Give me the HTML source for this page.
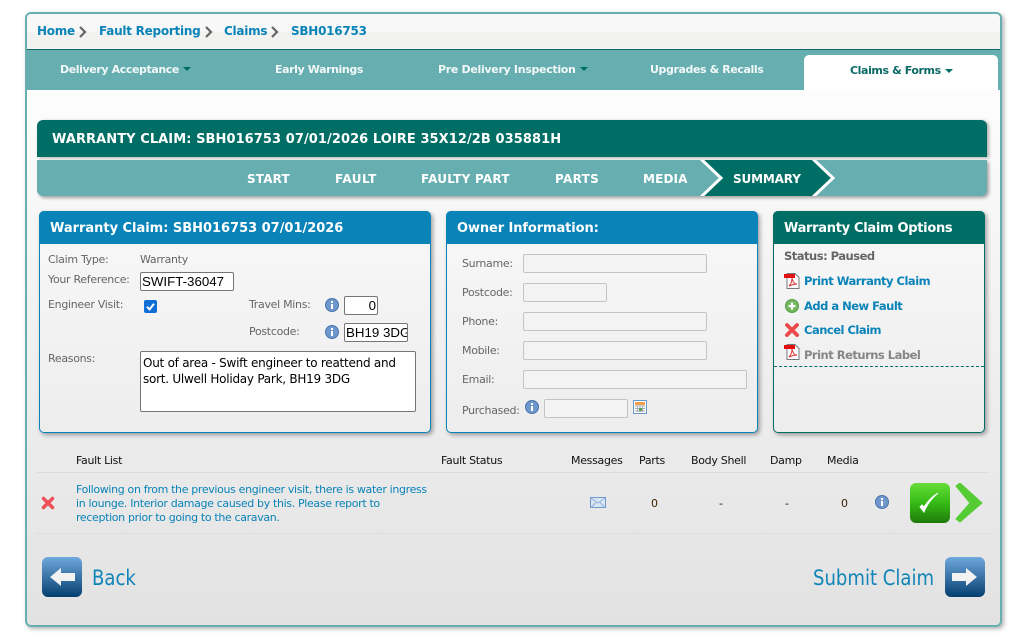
<!DOCTYPE html>
<html><head><meta charset="utf-8"><title>Warranty Claim</title>
<style>
html,body{margin:0;padding:0;background:#fff}
body{width:1026px;height:637px;position:relative;overflow:hidden;font-family:"DejaVu Sans","Liberation Sans",sans-serif;font-size:11px;letter-spacing:-.3px;color:#666}
.a,.t,.b,.i{position:absolute}
.t,.b{white-space:nowrap;line-height:14px}
.b{font-weight:bold;letter-spacing:-.25px}
.blue{color:#0a83b8}
.w{color:#fff}
.k{color:#111}
.nav{font-size:11px;letter-spacing:-.4px;color:#f2f8f8}
.step{font-size:12px;letter-spacing:.15px;color:#fff}
.opt{font-size:11.5px;letter-spacing:-.5px}
.panel{position:absolute;top:211px;height:220px;border-radius:5px;background:linear-gradient(#f8f8f8,#ededed);box-shadow:2px 2px 4px rgba(0,0,0,.35);border:1px solid #0a83b8}
.head{position:absolute;left:-1px;right:-1px;top:-1px;height:33px;border-radius:5px 5px 0 0;background:#0a83b8}
.inp{position:absolute;box-sizing:border-box;background:#fff;border:1px solid #767676;border-radius:2px;color:#000;font-family:"Liberation Sans",sans-serif;font-size:13.3px;letter-spacing:0;line-height:16px;overflow:hidden;white-space:nowrap;padding:1px}
.dis{position:absolute;box-sizing:border-box;border:1px solid #c4c4c4;border-radius:2px;background:#f3f3f3;height:19px}
.big{font-size:21px;line-height:26px;letter-spacing:0;color:#0f85b8;transform:scaleX(.86);transform-origin:0 0}
svg{position:absolute;display:block}
</style></head><body>

<div class="a" style="left:25px;top:12px;width:973px;height:611px;border:2px solid #66aeb0;border-radius:6px;background:linear-gradient(#fff,#fdfdfd 12%,#e2e2e2);box-shadow:2px 2px 4px rgba(0,0,0,.3)"></div>
<div class="a" style="left:27px;top:14px;width:973px;height:35px;background:linear-gradient(#f8f8f8,#f8f8f8 50%,#f2f2f1 50%);border-radius:4px 4px 0 0;border-bottom:1px solid #0e6a66"></div>
<div class="a" style="left:27px;top:50px;width:973px;height:40px;background:#66aeb0"></div>
<div class="a" style="left:804px;top:55px;width:194px;height:35px;background:#fff;border-radius:5px 5px 0 0"></div>

<div class="b blue" style="left:37px;top:24px;font-size:12px">Home</div>
<svg style="left:78px;top:26px" width="10" height="12"><path d="M2 1l5 5-5 5" fill="none" stroke="#666" stroke-width="2.2"/></svg>
<div class="b blue" style="left:99px;top:24px;font-size:12px">Fault Reporting</div>
<svg style="left:204px;top:26px" width="10" height="12"><path d="M2 1l5 5-5 5" fill="none" stroke="#666" stroke-width="2.2"/></svg>
<div class="b blue" style="left:224px;top:24px;font-size:12px">Claims</div>
<svg style="left:270px;top:26px" width="10" height="12"><path d="M2 1l5 5-5 5" fill="none" stroke="#666" stroke-width="2.2"/></svg>
<div class="b blue" style="left:291px;top:24px;font-size:12px">SBH016753</div>

<div class="b nav" style="left:60px;top:63px">Delivery Acceptance</div>
<svg style="left:183px;top:67px" width="8" height="5"><path d="M0 0h8L4 4z" fill="#006e65"/></svg>
<div class="b nav" style="left:275px;top:63px">Early Warnings</div>
<div class="b nav" style="left:438px;top:63px;letter-spacing:-.31px">Pre Delivery Inspection</div>
<svg style="left:580px;top:67px" width="8" height="5"><path d="M0 0h8L4 4z" fill="#006e65"/></svg>
<div class="b nav" style="left:650px;top:63px">Upgrades &amp; Recalls</div>
<div class="b nav" style="left:850px;top:64px;color:#0c6a66">Claims &amp; Forms</div>
<svg style="left:945px;top:69px" width="8" height="5"><path d="M0 0h8L4 4z" fill="#006e65"/></svg>

<div class="a" style="left:37px;top:120px;width:950px;height:37px;background:#006e65;border-radius:6px 6px 0 0;box-shadow:2px 1px 3px rgba(0,0,0,.3)"></div>
<div class="a" style="left:37px;top:160px;width:950px;height:36px;background:#66aeb0;border-radius:0 0 6px 6px;box-shadow:2px 2px 3px rgba(0,0,0,.35)"></div>
<div class="b w" style="left:52px;top:133px;font-size:13px;letter-spacing:.07px">WARRANTY CLAIM: SBH016753 07/01/2026 LOIRE 35X12/2B 035881H</div>
<svg style="left:698px;top:160px" width="140" height="36"><path d="M3 0H115L137 18 115 36H3L23 18z" fill="#006e65"/><path d="M115 0H137V36H115L137 18z" fill="#66aeb0"/><path d="M3-1L23 18 3 37M115-1L135 18 115 37" fill="none" stroke="#fff" stroke-width="3"/></svg>
<div class="b step" style="left:247px;top:172px">START</div>
<div class="b step" style="left:335px;top:172px;letter-spacing:.5px">FAULT</div>
<div class="b step" style="left:421px;top:172px;letter-spacing:.25px">FAULTY PART</div>
<div class="b step" style="left:555px;top:172px;letter-spacing:.3px">PARTS</div>
<div class="b step" style="left:643px;top:172px">MEDIA</div>
<div class="b step" style="left:733px;top:172px;letter-spacing:-.15px">SUMMARY</div>

<!-- Left panel -->
<div class="panel" style="left:39px;width:390px"><div class="head"></div></div>
<div class="b w" style="left:50px;top:222px;font-size:13px;letter-spacing:-.02px">Warranty Claim: SBH016753 07/01/2026</div>
<div class="t" style="left:48px;top:253px">Claim Type:</div>
<div class="t" style="left:140px;top:253px">Warranty</div>
<div class="t" style="left:48px;top:273px">Your Reference:</div>
<div class="inp" style="left:140px;top:272px;width:94px;height:19px">SWIFT-36047</div>
<div class="t" style="left:48px;top:298px">Engineer Visit:</div>
<svg style="left:144px;top:300px" width="13" height="13"><rect width="13" height="13" rx="2" fill="#0f6fd6"/><path d="M3 6.800l2.600 2.600L10 3.800" fill="none" stroke="#fff" stroke-width="2"/></svg>
<div class="t" style="left:249px;top:298px">Travel Mins:</div>
<svg class="i" style="left:325px;top:298px" width="14" height="14"><circle cx="7" cy="7" r="6.500" fill="#6e97cb" stroke="#4a74ab"/><rect x="6" y="6" width="2" height="5" fill="#fff"/><rect x="6" y="3" width="2" height="2" fill="#fff"/></svg>
<div class="inp" style="left:344px;top:296px;width:34px;height:19px;text-align:right">0</div>
<div class="t" style="left:249px;top:325px">Postcode:</div>
<svg class="i" style="left:325px;top:325px" width="14" height="14"><circle cx="7" cy="7" r="6.500" fill="#6e97cb" stroke="#4a74ab"/><rect x="6" y="6" width="2" height="5" fill="#fff"/><rect x="6" y="3" width="2" height="2" fill="#fff"/></svg>
<div class="inp" style="left:344px;top:323px;width:64px;height:19px">BH19 3DG</div>
<div class="t" style="left:48px;top:352px">Reasons:</div>
<div class="inp" style="left:140px;top:351px;width:276px;height:61px;font-family:'DejaVu Sans',sans-serif;font-size:12px;letter-spacing:-.25px;white-space:normal;padding:3px 2px">Out of area - Swift engineer to reattend and<br>sort. Ulwell Holiday Park, BH19 3DG</div>

<!-- Owner panel -->
<div class="panel" style="left:446px;width:310px"><div class="head"></div></div>
<div class="b w" style="left:457px;top:222px;font-size:13px;letter-spacing:-.1px">Owner Information:</div>
<div class="t" style="left:462px;top:257px">Surname:</div><div class="dis" style="left:523px;top:254px;width:184px"></div>
<div class="t" style="left:462px;top:286px">Postcode:</div><div class="dis" style="left:523px;top:283px;width:84px"></div>
<div class="t" style="left:462px;top:315px">Phone:</div><div class="dis" style="left:523px;top:312px;width:184px"></div>
<div class="t" style="left:462px;top:344px">Mobile:</div><div class="dis" style="left:523px;top:341px;width:184px"></div>
<div class="t" style="left:462px;top:373px">Email:</div><div class="dis" style="left:523px;top:370px;width:224px"></div>
<div class="t" style="left:462px;top:404px">Purchased:</div>
<svg class="i" style="left:525px;top:400px" width="14" height="14"><circle cx="7" cy="7" r="6.500" fill="#6e97cb" stroke="#4a74ab"/><rect x="6" y="6" width="2" height="5" fill="#fff"/><rect x="6" y="3" width="2" height="2" fill="#fff"/></svg>
<div class="dis" style="left:544px;top:399px;width:84px"></div>
<svg style="left:633px;top:400px" width="14" height="14"><rect x=".5" y=".5" width="13" height="13" fill="#fff" stroke="#6e97cb"/><rect x="2" y="2" width="10" height="3" fill="#f2a04e"/><path d="M2 6h10M2 8.500h10M2 11h10M4.500 6v6M7 6v6M9.500 6v6" stroke="#aab" stroke-width="1"/><rect x="6" y="8" width="3" height="3" fill="#5aa650"/></svg>

<!-- Options panel -->
<div class="panel" style="left:773px;width:210px;border-color:#006e65"><div class="head" style="background:#006e65"></div></div>
<div class="b w" style="left:784px;top:222px;font-size:13px;letter-spacing:-.3px">Warranty Claim Options</div>
<div class="b opt" style="left:784px;top:249px;color:#666">Status: Paused</div>
<svg style="left:784px;top:273px" width="16" height="16"><path d="M3 .5h8l4 4v11H3z" fill="#fff" stroke="#777"/><path d="M0 1h11v4H0z" fill="#e01010"/><path d="M5 13c3-3 3-7 3-8 1 4 2 6 5 6-3 0-5 1-8 2z" fill="none" stroke="#d33" stroke-width="1"/></svg>
<div class="b opt blue" style="left:804px;top:274px">Print Warranty Claim</div>
<svg style="left:785px;top:299px" width="14" height="14"><circle cx="7" cy="7" r="6.500" fill="#72b85e" stroke="#5c9c4b"/><path d="M7 3.500v7M3.500 7h7" stroke="#fff" stroke-width="2.200"/></svg>
<div class="b opt blue" style="left:804px;top:299px">Add a New Fault</div>
<svg style="left:785px;top:323px" width="14" height="14"><path d="M2 2l10 10M12 2L2 12" stroke="#ee4a4a" stroke-width="3.800" stroke-linecap="round"/></svg>
<div class="b opt blue" style="left:804px;top:323px">Cancel Claim</div>
<svg style="left:784px;top:344px" width="16" height="16"><path d="M3 .5h8l4 4v11H3z" fill="#fff" stroke="#777"/><path d="M0 1h11v4H0z" fill="#e01010"/><path d="M5 13c3-3 3-7 3-8 1 4 2 6 5 6-3 0-5 1-8 2z" fill="none" stroke="#d33" stroke-width="1"/></svg>
<div class="b opt" style="left:804px;top:348px;color:#868686">Print Returns Label</div>
<div class="a" style="left:774px;top:366px;width:210px;border-top:1px dashed #006e65"></div>

<!-- Fault list -->
<div class="t k" style="left:76px;top:454px">Fault List</div>
<div class="t k" style="left:441px;top:454px">Fault Status</div>
<div class="t k" style="left:571px;top:454px">Messages</div>
<div class="t k" style="left:639px;top:454px">Parts</div>
<div class="t k" style="left:691px;top:454px">Body Shell</div>
<div class="t k" style="left:770px;top:454px">Damp</div>
<div class="t k" style="left:827px;top:454px">Media</div>
<div class="a" style="left:37px;top:472px;width:953px;border-top:1px solid #dcdcdc"></div>
<div class="a" style="left:37px;top:533px;width:953px;border-top:1px solid #dcdcdc"></div>
<svg style="left:41px;top:496px" width="14" height="14"><path d="M2.500 2.500l9 9M11.500 2.500l-9 9" stroke="#ef4f58" stroke-width="3.500" stroke-linecap="round"/></svg>
<div class="t blue" style="left:76px;top:483px;letter-spacing:-.345px">Following on from the previous engineer visit, there is water ingress</div>
<div class="t blue" style="left:76px;top:497px;letter-spacing:-.345px">in lounge. Interior damage caused by this. Please report to</div>
<div class="t blue" style="left:76px;top:511px;letter-spacing:-.345px">reception prior to going to the caravan.</div>
<svg style="left:590px;top:497px" width="16" height="12"><rect x=".5" y=".5" width="15" height="10" fill="#d9e6f5" stroke="#6e97cb"/><path d="M1 1l7 5 7-5M1 10.500l5-5M15 10.500l-5-5" fill="none" stroke="#8fb0d8"/></svg>
<div class="t" style="left:651px;top:497px;color:#3a2000">0</div>
<div class="t k" style="left:719px;top:497px">-</div>
<div class="t k" style="left:785px;top:497px">-</div>
<div class="t" style="left:841px;top:497px;color:#3a2000">0</div>
<svg class="i" style="left:875px;top:495px" width="14" height="14"><circle cx="7" cy="7" r="6.500" fill="#6e97cb" stroke="#4a74ab"/><rect x="6" y="6" width="2" height="5" fill="#fff"/><rect x="6" y="3" width="2" height="2" fill="#fff"/></svg>
<svg style="left:910px;top:483px" width="75" height="42"><defs><linearGradient id="g" x1="0" y1="0" x2="0" y2="1"><stop offset="0" stop-color="#66dd3a"/><stop offset=".5" stop-color="#35bb14"/><stop offset="1" stop-color="#1f7a0c"/></linearGradient><linearGradient id="bb" x1="0" y1="0" x2="0" y2="1"><stop offset="0" stop-color="#6fa8dc"/><stop offset="1" stop-color="#053f70"/></linearGradient></defs><rect width="40" height="40" rx="6" fill="url(#g)"/><path d="M10 24l4 5c3-8 8-14 14-19-7 4-11 10-14 14l-2-2z" fill="#fff" stroke="#fff"/><path d="M46 3L50 0 72 20 50 39 46 36 60 20z" fill="#55cc33" stroke="#55cc33" stroke-linejoin="round"/></svg>

<!-- Back / Submit -->
<svg style="left:42px;top:557px" width="40" height="40"><rect width="40" height="40" rx="6" fill="url(#bb)"/><path d="M8 20l11-9v5h14v8H19v5z" fill="#f2f2f2"/></svg>
<div class="t big" style="left:92px;top:565px">Back</div>
<div class="t big" style="left:813px;top:565px">Submit Claim</div>
<svg style="left:945px;top:557px" width="40" height="40"><rect width="40" height="40" rx="6" fill="url(#bb)"/><path d="M32 20l-11-9v5H7v8h14v5z" fill="#f2f2f2"/></svg>
</body></html>
